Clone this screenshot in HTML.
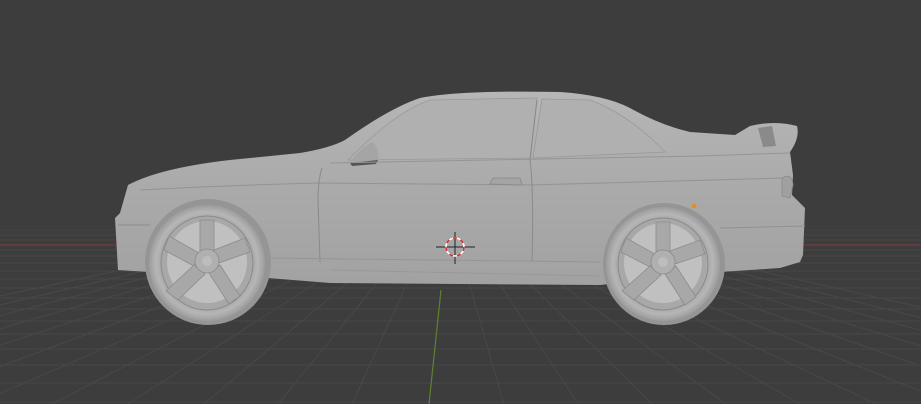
<!DOCTYPE html>
<html><head><style>
html,body{margin:0;padding:0;background:#3d3d3d;width:921px;height:404px;overflow:hidden}
svg{display:block}
</style></head><body>
<svg width="921" height="404" viewBox="0 0 921 404" xmlns="http://www.w3.org/2000/svg">
<defs>
<linearGradient id="body" x1="0" y1="0" x2="0" y2="1">
<stop offset="0" stop-color="#b6b6b6"/><stop offset="0.5" stop-color="#aaaaaa"/><stop offset="1" stop-color="#a2a2a2"/>
</linearGradient>
<radialGradient id="tire" cx="0.5" cy="0.5" r="0.5">
<stop offset="0.75" stop-color="#a4a4a4"/><stop offset="0.88" stop-color="#b6b6b6"/><stop offset="1" stop-color="#9c9c9c"/>
</radialGradient>
</defs>
<rect width="921" height="404" fill="#3d3d3d"/>
<g stroke="#484848" stroke-width="1" fill="none">
<line x1="0" y1="222" x2="921" y2="222"/>
<line x1="0" y1="226" x2="921" y2="226"/>
<line x1="0" y1="230" x2="921" y2="230"/>
<line x1="0" y1="235" x2="921" y2="235"/>
<line x1="0" y1="240" x2="921" y2="240"/>
<line x1="0" y1="250" x2="921" y2="250"/>
<line x1="0" y1="256" x2="921" y2="256"/>
<line x1="0" y1="263" x2="921" y2="263"/>
<line x1="0" y1="271" x2="921" y2="271"/>
<line x1="0" y1="279" x2="921" y2="279"/>
<line x1="0" y1="288" x2="921" y2="288"/>
<line x1="0" y1="298" x2="921" y2="298"/>
<line x1="0" y1="309" x2="921" y2="309"/>
<line x1="0" y1="321" x2="921" y2="321"/>
<line x1="0" y1="334" x2="921" y2="334"/>
<line x1="0" y1="349" x2="921" y2="349"/>
<line x1="0" y1="365" x2="921" y2="365"/>
<line x1="0" y1="383" x2="921" y2="383"/>
<line x1="0" y1="402" x2="921" y2="402"/>
</g>
<g stroke="#484848" stroke-width="1">
<line x1="445" y1="200" x2="-500" y2="404"/>
<line x1="445" y1="200" x2="-420" y2="404"/>
<line x1="445" y1="200" x2="-340" y2="404"/>
<line x1="445" y1="200" x2="-260" y2="404"/>
<line x1="445" y1="200" x2="-180" y2="404"/>
<line x1="445" y1="200" x2="-100" y2="404"/>
<line x1="445" y1="200" x2="-24" y2="404"/>
<line x1="445" y1="200" x2="52" y2="404"/>
<line x1="445" y1="200" x2="128" y2="404"/>
<line x1="445" y1="200" x2="204" y2="404"/>
<line x1="445" y1="200" x2="278" y2="404"/>
<line x1="445" y1="200" x2="352" y2="404"/>
<line x1="445" y1="200" x2="504" y2="404"/>
<line x1="445" y1="200" x2="578" y2="404"/>
<line x1="445" y1="200" x2="652" y2="404"/>
<line x1="445" y1="200" x2="726" y2="404"/>
<line x1="445" y1="200" x2="800" y2="404"/>
<line x1="445" y1="200" x2="876" y2="404"/>
<line x1="445" y1="200" x2="952" y2="404"/>
<line x1="445" y1="200" x2="1030" y2="404"/>
<line x1="445" y1="200" x2="1110" y2="404"/>
<line x1="445" y1="200" x2="1190" y2="404"/>
<line x1="445" y1="200" x2="1270" y2="404"/>
<line x1="445" y1="200" x2="1350" y2="404"/>
</g>
<rect x="0" y="190" width="921" height="40" fill="#3d3d3d" opacity="0.7"/>
<line x1="0" y1="245" x2="921" y2="245" stroke="#7e3a3e" stroke-width="1.2"/>
<line x1="441" y1="290" x2="429" y2="404" stroke="#62802f" stroke-width="1.2"/>

<path d="M118,270 L115,218 L120,213 L128,185 Q160,168 230,160 L300,153 Q330,148 345,140 Q390,108 420,98 Q460,90 560,92 Q605,95 630,108 Q660,125 690,132 L735,135 L750,126 Q775,120 797,126 Q800,138 790,152 L793,175 L792,195 L805,208 L803,255 L800,262 L780,268 L720,272 L600,285 L330,283 L268,278 L150,272 Z" fill="url(#body)"/>
<path d="M348,160 Q395,112 430,100 L537,98 L530,158 Z" fill="#b0b0b0" stroke="#999" stroke-width="0.8"/>
<path d="M542,99 L590,100 Q630,115 665,152 L533,158 Z" fill="#b0b0b0" stroke="#999" stroke-width="0.8"/>
<path d="M350,163 Q358,150 372,142 Q380,148 378,160 Z" fill="#a5a5a5"/>
<path d="M350,163 L378,160 L376,164 L352,166 Z" fill="#555"/>
<path d="M330,163 L700,156 L790,153" stroke="#959595" stroke-width="1" fill="none"/>
<path d="M140,190 Q230,185 320,183 L530,185 L785,178" stroke="#939393" stroke-width="1" fill="none"/>
<path d="M322,168 Q318,180 318,200 L320,262" stroke="#8a8a8a" stroke-width="1" fill="none"/>
<path d="M537,100 L530,160 Q534,190 532,262" stroke="#8a8a8a" stroke-width="1" fill="none"/>
<path d="M490,184 L493,178 L520,178 L522,185 Z" fill="#a4a4a4" stroke="#888" stroke-width="0.8"/>
<path d="M268,258 L600,262" stroke="#959595" stroke-width="1" fill="none"/>
<path d="M330,270 L600,276" stroke="#999" stroke-width="1" fill="none"/>
<path d="M118,225 L150,225" stroke="#8c8c8c" stroke-width="1"/>
<path d="M720,228 L805,226" stroke="#909090" stroke-width="1"/>
<path d="M758,128 L772,126 L776,146 L763,147 Z" fill="#8a8a8a"/>
<path d="M782,178 Q792,172 793,185 L790,198 L782,196 Z" fill="#a0a0a0" stroke="#8a8a8a" stroke-width="0.8"/>
<circle cx="694" cy="206" r="2.5" fill="#e0902a"/>
<ellipse cx="208" cy="262" rx="63" ry="63" fill="#959595"/>
<ellipse cx="664" cy="264" rx="61" ry="61" fill="#959595"/>
<g>
<ellipse cx="207" cy="263" rx="58" ry="58" fill="url(#tire)"/>
<ellipse cx="207" cy="263" rx="46" ry="47" fill="#a8a8a8" stroke="#8a8a8a" stroke-width="1"/>
<ellipse cx="207" cy="262" rx="40" ry="41" fill="#c0c0c0"/>
<g fill="#a8a8a8" stroke="#8c8c8c" stroke-width="0.8">
<path d="M200,220 L214,220 L214,252 L200,252 Z"/>
<path d="M164,250 L169,236 L199,253 L194,266 Z"/>
<path d="M245,238 L250,252 L219,263 L214,250 Z"/>
<path d="M178,300 L166,291 L194,265 L205,274 Z"/>
<path d="M240,296 L229,304 L209,273 L220,265 Z"/>
</g>
<circle cx="207" cy="261" r="12" fill="#b0b0b0" stroke="#8a8a8a" stroke-width="0.8"/>
<circle cx="207" cy="261" r="5" fill="#bdbdbd"/>
</g>
<g>
<ellipse cx="663" cy="264" rx="57" ry="57" fill="url(#tire)"/>
<ellipse cx="663" cy="264" rx="45" ry="46" fill="#a8a8a8" stroke="#8a8a8a" stroke-width="1"/>
<ellipse cx="663" cy="263" rx="39" ry="40" fill="#c0c0c0"/>
<g fill="#a8a8a8" stroke="#8c8c8c" stroke-width="0.8">
<path d="M656,222 L670,222 L670,253 L656,253 Z"/>
<path d="M621,252 L626,238 L655,254 L650,267 Z"/>
<path d="M700,240 L705,254 L675,264 L670,251 Z"/>
<path d="M634,300 L622,291 L650,266 L661,275 Z"/>
<path d="M696,297 L685,305 L665,274 L676,266 Z"/>
</g>
<circle cx="663" cy="262" r="12" fill="#b0b0b0" stroke="#8a8a8a" stroke-width="0.8"/>
<circle cx="663" cy="262" r="5" fill="#bdbdbd"/>
</g>
<g>
<line x1="455" y1="232" x2="455" y2="264" stroke="#222" stroke-width="1"/>
<line x1="436" y1="247" x2="475" y2="247" stroke="#222" stroke-width="1"/>
<circle cx="455" cy="247" r="9" fill="none" stroke="#fff" stroke-width="1.6"/>
<circle cx="455" cy="247" r="9" fill="none" stroke="#d03030" stroke-width="1.6" stroke-dasharray="4 4"/>
</g>
</svg>
</body></html>
